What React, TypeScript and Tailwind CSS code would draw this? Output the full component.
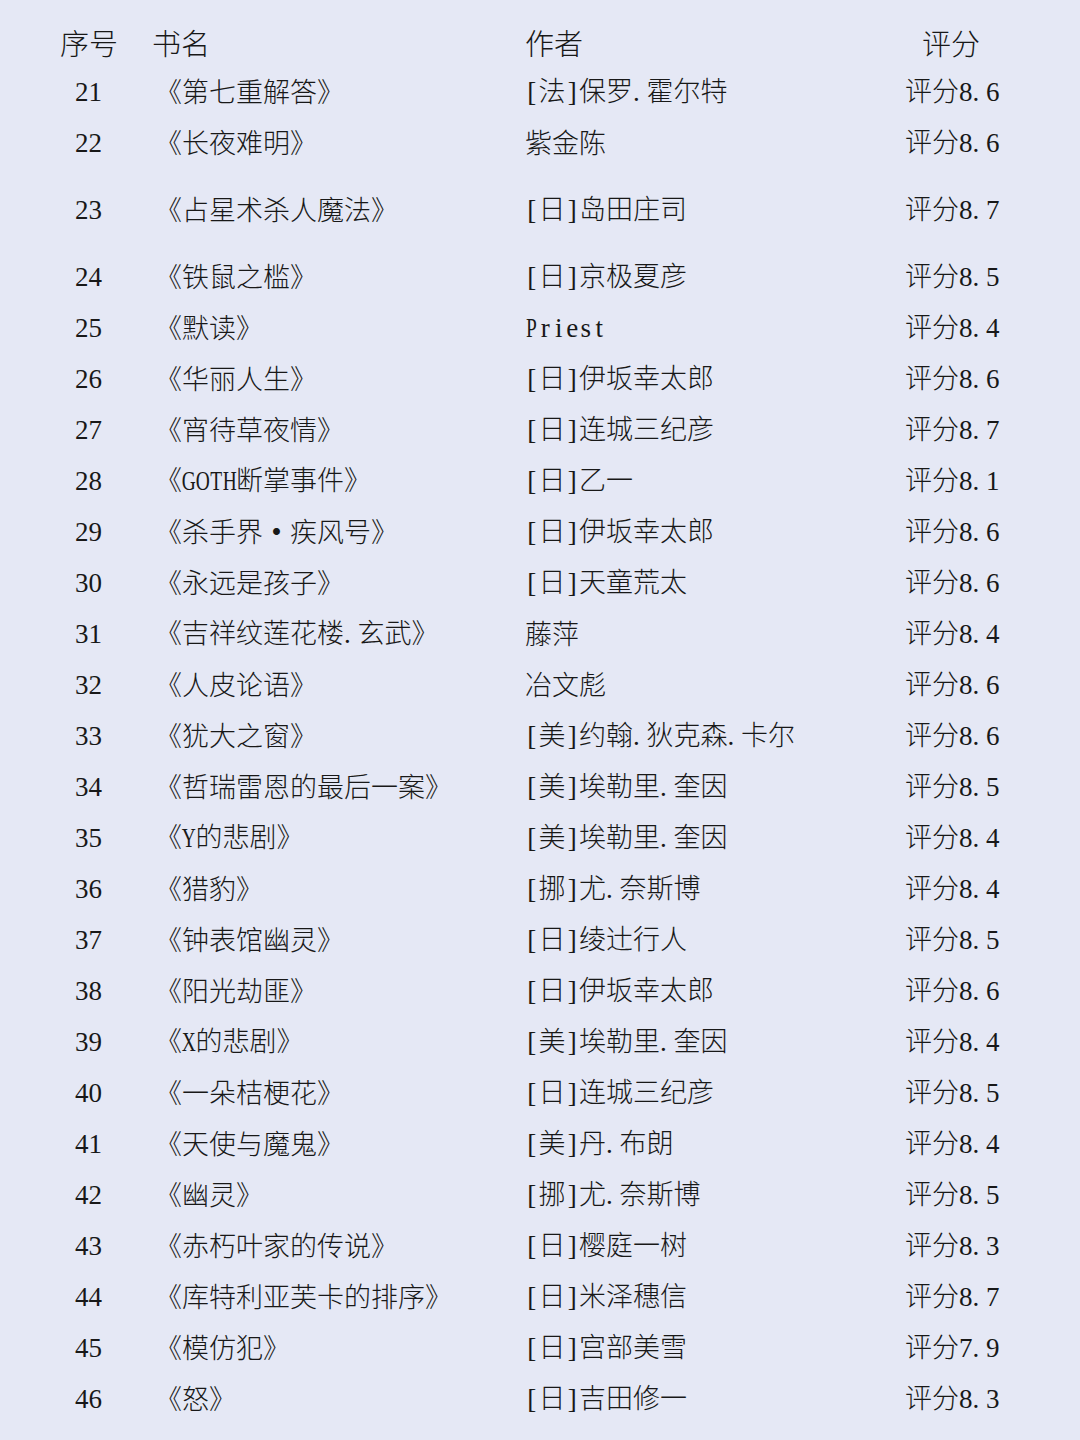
import React from 'react';

type Book = { no: number; title: string; author: string; score: string; tall?: boolean };

const BOOKS: Book[] = [
  { no: 21, title: '《第七重解答》', author: '[法]保罗.霍尔特', score: '8.6' },
  { no: 22, title: '《长夜难明》', author: '紫金陈', score: '8.6' },
  { no: 23, title: '《占星术杀人魔法》', author: '[日]岛田庄司', score: '8.7', tall: true },
  { no: 24, title: '《铁鼠之槛》', author: '[日]京极夏彦', score: '8.5' },
  { no: 25, title: '《默读》', author: 'Priest', score: '8.4' },
  { no: 26, title: '《华丽人生》', author: '[日]伊坂幸太郎', score: '8.6' },
  { no: 27, title: '《宵待草夜情》', author: '[日]连城三纪彦', score: '8.7' },
  { no: 28, title: '《GOTH断掌事件》', author: '[日]乙一', score: '8.1' },
  { no: 29, title: '《杀手界·疾风号》', author: '[日]伊坂幸太郎', score: '8.6' },
  { no: 30, title: '《永远是孩子》', author: '[日]天童荒太', score: '8.6' },
  { no: 31, title: '《吉祥纹莲花楼.玄武》', author: '藤萍', score: '8.4' },
  { no: 32, title: '《人皮论语》', author: '冶文彪', score: '8.6' },
  { no: 33, title: '《犹大之窗》', author: '[美]约翰.狄克森.卡尔', score: '8.6' },
  { no: 34, title: '《哲瑞雷恩的最后一案》', author: '[美]埃勒里.奎因', score: '8.5' },
  { no: 35, title: '《Y的悲剧》', author: '[美]埃勒里.奎因', score: '8.4' },
  { no: 36, title: '《猎豹》', author: '[挪]尤.奈斯博', score: '8.4' },
  { no: 37, title: '《钟表馆幽灵》', author: '[日]绫辻行人', score: '8.5' },
  { no: 38, title: '《阳光劫匪》', author: '[日]伊坂幸太郎', score: '8.6' },
  { no: 39, title: '《X的悲剧》', author: '[美]埃勒里.奎因', score: '8.4' },
  { no: 40, title: '《一朵桔梗花》', author: '[日]连城三纪彦', score: '8.5' },
  { no: 41, title: '《天使与魔鬼》', author: '[美]丹.布朗', score: '8.4' },
  { no: 42, title: '《幽灵》', author: '[挪]尤.奈斯博', score: '8.5' },
  { no: 43, title: '《赤朽叶家的传说》', author: '[日]樱庭一树', score: '8.3' },
  { no: 44, title: '《库特利亚芙卡的排序》', author: '[日]米泽穗信', score: '8.7' },
  { no: 45, title: '《模仿犯》', author: '[日]宫部美雪', score: '7.9' },
  { no: 46, title: '《怒》', author: '[日]吉田修一', score: '8.3' },
];

// half-width cells, the way the song-style font lays out latin text
function Txt({ s }: { s: string }) {
  return (
    <>
      {Array.from(s).map((ch, i) => {
        if (ch === '·') {
          return (
            <span key={i} className="inline-block w-[27px] text-center font-bold">
              ·
            </span>
          );
        }
        if (ch === '.') {
          return (
            <span key={i} className="inline-block w-[13.5px] text-left font-['Liberation_Serif',serif]">
              .
            </span>
          );
        }
        if (/[A-Z]/.test(ch)) {
          return (
            <span key={i} className="inline-flex w-[13.5px] justify-center font-['Liberation_Serif',serif]">
              <span className="inline-block scale-x-[0.72]">{ch}</span>
            </span>
          );
        }
        if (/[0-9a-z\[\]]/.test(ch)) {
          return (
            <span key={i} className="inline-block w-[13.5px] text-center font-['Liberation_Serif',serif]">
              {ch}
            </span>
          );
        }
        return <React.Fragment key={i}>{ch}</React.Fragment>;
      })}
    </>
  );
}

export default function App() {
  return (
    <div className="min-h-[1440px] w-[1080px] bg-[#e5e8f5] pt-[20px] font-['Noto_Sans_CJK_SC',sans-serif] font-light text-[#181818]">
      <div className="flex h-[45px] items-center text-[29px] leading-none">
        <div className="w-[152px] pl-[60px]">序号</div>
        <div className="w-[373px]">书名</div>
        <div className="w-[397px]">作者</div>
        <div>评分</div>
      </div>
      {BOOKS.map((b) => (
        <div
          key={b.no}
          className={`flex items-center text-[27px] leading-none ${b.tall ? 'h-[83px]' : 'h-[51px]'}`}
        >
          <div className="w-[155px] pl-[75px]">
            <Txt s={String(b.no)} />
          </div>
          <div className="w-[370px] whitespace-nowrap">
            <Txt s={b.title} />
          </div>
          <div className="w-[380px] whitespace-nowrap">
            <Txt s={b.author} />
          </div>
          <div className="whitespace-nowrap">
            评分
            <Txt s={b.score} />
          </div>
        </div>
      ))}
    </div>
  );
}
